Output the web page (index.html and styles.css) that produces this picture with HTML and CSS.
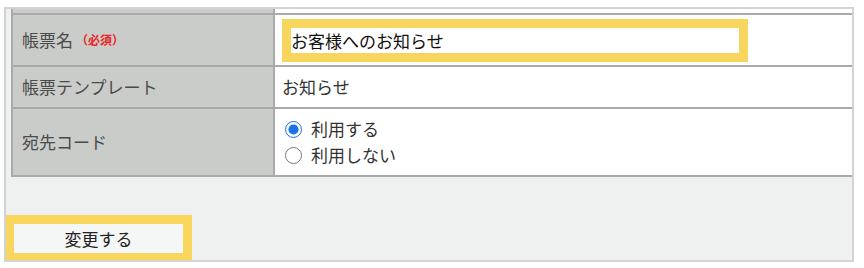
FILE: index.html
```html
<!DOCTYPE html>
<html lang="ja">
<head>
<meta charset="utf-8">
<link rel="stylesheet" href="styles.css">
</head>
<body>
<div class="panel">
  <div class="table">
    <div class="row row-cut">
      <div class="label"></div>
      <div class="value"></div>
    </div>
    <div class="row row-name">
      <div class="label">帳票名<span class="req">（必須）</span></div>
      <div class="value"><input class="text-input" type="text" value="お客様へのお知らせ"></div>
    </div>
    <div class="row row-tpl">
      <div class="label">帳票テンプレート</div>
      <div class="value">お知らせ</div>
    </div>
    <div class="row row-code">
      <div class="label">宛先コード</div>
      <div class="value radios">
        <label class="radio-line"><input class="radio" type="radio" name="code" checked>利用する</label>
        <label class="radio-line"><input class="radio" type="radio" name="code">利用しない</label>
      </div>
    </div>
  </div>
  <button class="submit" type="button">変更する</button>
</div>
</body>
</html>
```

FILE: styles.css
```css
html, body {
  margin: 0;
  padding: 0;
  background: #ffffff;
}
body {
  font-family: "Noto Sans CJK JP", "Noto Sans", sans-serif;
  font-size: 17px;
  line-height: 1.2;
}
.panel {
  margin: 7px 0 0 4px;
  width: 846px;
  height: 251px;
  border: 2px solid #d3d3d3;
  background: #eff1f0;
  display: flex;
  flex-direction: column;
  align-items: flex-start;
  overflow: hidden;
}
.table {
  margin-left: 5px;
  width: 841px;
  border-left: 2px solid #a9aba9;
  display: flex;
  flex-direction: column;
}
.row {
  display: flex;
  border-bottom: 2px solid #a9a9a9;
}
.label {
  width: 262px;
  flex: none;
  background: #c9ccc9;
  border-right: 2px solid #a9aba9;
  color: #4a4a4a;
  padding-left: 9px;
  box-sizing: border-box;
  display: flex;
  align-items: center;
}
.value {
  flex: 1;
  background: #ffffff;
  color: #333333;
  padding-left: 7px;
  display: flex;
  align-items: center;
}
.row-cut { height: 4px; }
.row-name { height: 50px; }
.row-tpl { height: 40px; }
.row-code { height: 66px; }
.req {
  color: #ee2222;
  font-size: 12px;
  font-weight: bold;
  margin-left: 3px;
}
.text-input {
  margin: 0 0 0 9px;
  width: 448px;
  height: 25px;
  box-sizing: border-box;
  border: none;
  padding: 0;
  outline: 9px solid #f8d55c;
  background: #ffffff;
  font-family: inherit;
  font-size: 17px;
  color: #111111;
}
.radios {
  flex-direction: column;
  align-items: flex-start;
  justify-content: center;
}
.radio-line {
  display: flex;
  align-items: center;
  height: 26px;
  color: #333333;
}
.radio {
  width: 17px;
  height: 17px;
  margin: 0 9px 0 3px;
  accent-color: #1a73e8;
}
.submit {
  margin: 47px 0 0 8px;
  width: 169px;
  height: 29px;
  border: none;
  padding: 0;
  background: #f5f6f6;
  outline: 9px solid #f8d55c;
  font-family: inherit;
  font-size: 17px;
  color: #222222;
}
```
